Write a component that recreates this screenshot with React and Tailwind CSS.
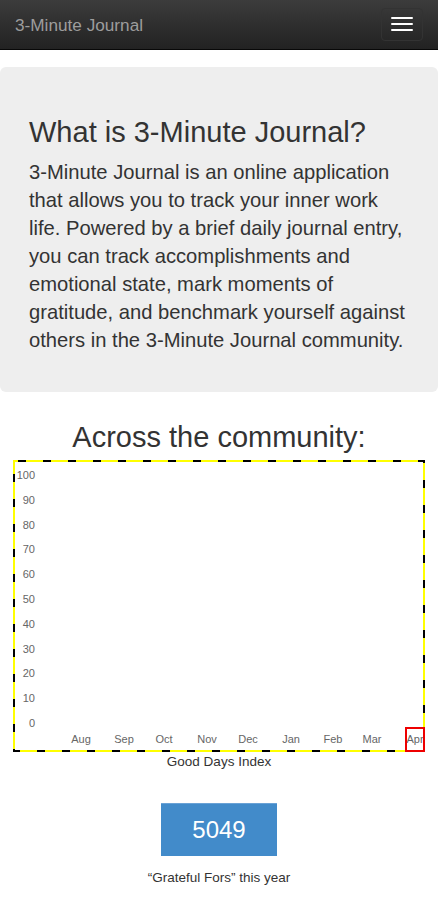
import React from 'react'

const Y_TICKS = [100, 90, 80, 70, 60, 50, 40, 30, 20, 10, 0]
const MONTHS = [
  ['Aug', 68], ['Sep', 111], ['Oct', 151], ['Nov', 194], ['Dec', 235],
  ['Jan', 278], ['Feb', 320], ['Mar', 359], ['Apr', 402],
]

function Chart() {
  return (
    <svg width="412" height="292" className="block" style={{ fontFamily: '"Liberation Sans", Arial, sans-serif' }}>
      <defs>
        <clipPath id="plot">
          <rect x="2" y="2" width="408" height="288" />
        </clipPath>
      </defs>
      <rect x="0" y="0" width="412" height="292" fill="#fff" />
      <g clipPath="url(#plot)" fontSize="11" fill="#666">
        {Y_TICKS.map((v, i) => (
          <text key={v} x="22" y={15 + i * 24.8} textAnchor="end" dominantBaseline="central">{v}</text>
        ))}
        {MONTHS.map(([m, x]) => (
          <text key={m} x={x} y="279" textAnchor="middle" dominantBaseline="central">{m}</text>
        ))}
      </g>
      {/* debug outline round the chart */}
      <rect x="1" y="1" width="410" height="290" fill="none" stroke="#ffff00" strokeWidth="2" />
      <rect x="1" y="1" width="410" height="290" fill="none" stroke="#000" strokeWidth="2" strokeDasharray="8 17" strokeDashoffset="-4" />
      <rect x="393" y="268" width="18" height="23" fill="none" stroke="#e00" strokeWidth="2" />
    </svg>
  )
}

export default function App() {
  return (
    <div className="min-h-[899px] bg-white text-[#333]" style={{ fontFamily: '"Liberation Sans", Arial, sans-serif' }}>
      {/* Navbar */}
      <nav className="h-[50px] border-b border-[#080808] bg-gradient-to-b from-[#3c3c3c] to-[#222] flex items-center justify-between pl-[15px] pr-[15px]">
        <span className="text-[17.2px] text-[#9d9d9d] leading-5">3-Minute Journal</span>
        <button className="w-[42px] h-[33px] rounded border border-[#333] flex flex-col items-center justify-center gap-[4px] mt-[-1px]">
          <span className="block w-[22px] h-[2px] rounded-[1px] bg-white" />
          <span className="block w-[22px] h-[2px] rounded-[1px] bg-white" />
          <span className="block w-[22px] h-[2px] rounded-[1px] bg-white" />
        </button>
      </nav>

      {/* Jumbotron */}
      <section className="mt-[17px] bg-[#eee] rounded-[6px] pl-[29px] pr-[24px] pt-[49px] pb-[38px]">
        <h1 className="text-[29px] leading-[33px] font-normal text-[#333]">What is 3-Minute Journal?</h1>
        <p className="mt-[9px] text-[20.2px] leading-[28px] text-[#333]">
          3-Minute Journal is an online application that allows you to track your inner work life. Powered by a brief daily journal entry, you can track accomplishments and emotional state, mark moments of gratitude, and benchmark yourself against others in the 3-Minute Journal community.
        </p>
      </section>

      {/* Community */}
      <h2 className="mt-[29px] text-center text-[29px] leading-[33px] font-normal text-[#333]">Across the community:</h2>
      <div className="mt-[6px] pl-[13px]">
        <Chart />
      </div>
      <p className="text-center text-[13.5px] leading-5 text-[#333]">Good Days Index</p>

      <div className="flex flex-col items-center mt-[31px]">
        <div className="w-[116px] h-[53px] bg-[#428bca] border-t border-[#6aa2d6] flex items-center justify-center text-white text-[24px]">5049</div>
        <p className="mt-[13px] text-[13.5px] leading-[18px] text-[#333]">“Grateful Fors” this year</p>
      </div>
    </div>
  )
}
